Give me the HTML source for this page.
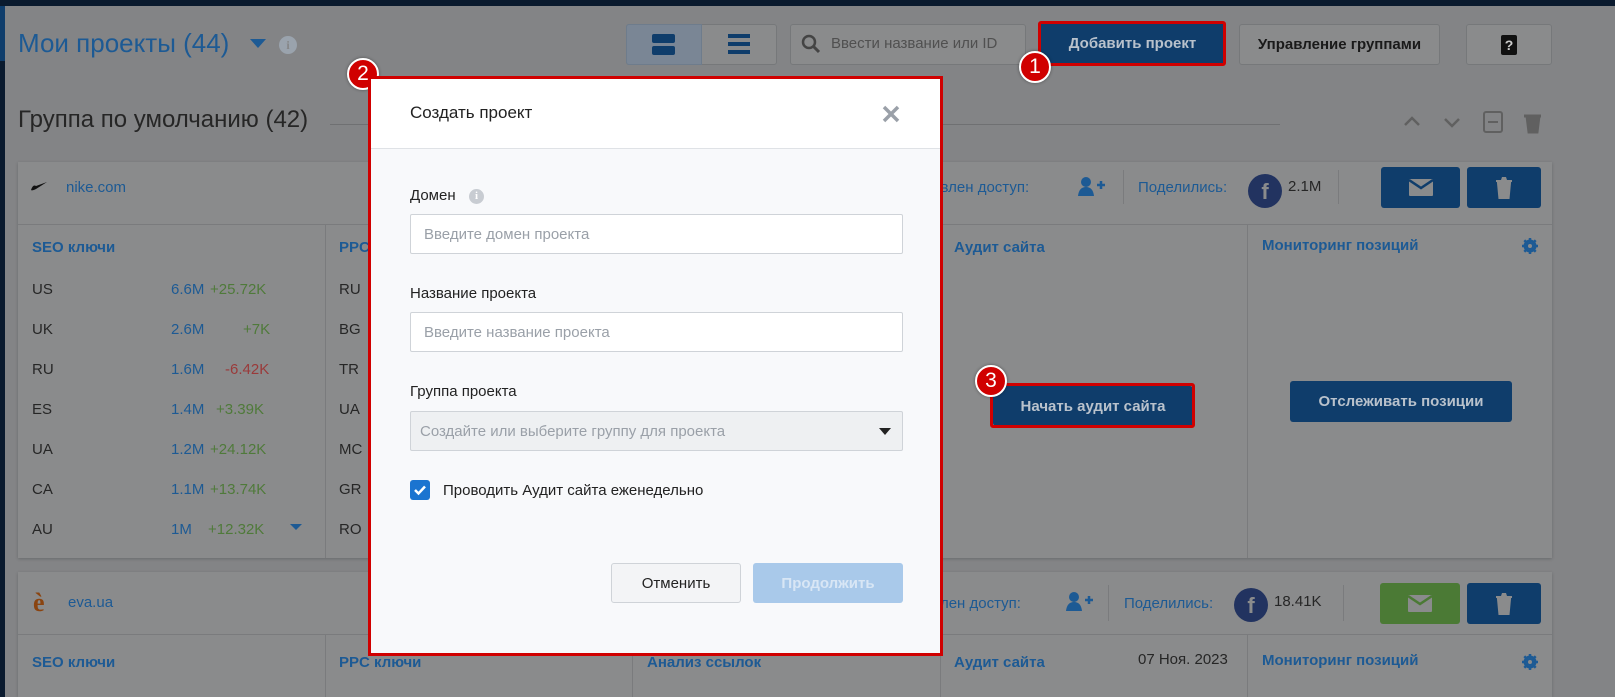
<!DOCTYPE html>
<html style="overflow:hidden"><head><meta charset="utf-8">
<style>
*{box-sizing:border-box;margin:0;padding:0}
html,body{width:1615px;height:697px;overflow:hidden}
body{position:relative;background:#838486;font-family:"Liberation Sans",sans-serif;color:#262626}
.a{position:absolute}
.btn{position:absolute;background:#0f3d6b;color:#b9c2cc;font-weight:bold;font-size:15px;display:flex;align-items:center;justify-content:center;border-radius:3px}
.wbtn{position:absolute;background:#8a8b8c;border:1px solid #76787a;border-radius:3px;font-size:15px;font-weight:bold;color:#1a1a1a;display:flex;align-items:center;justify-content:center}
.card{position:absolute;left:18px;width:1534px;background:#8a8b8c;box-shadow:0 1px 3px rgba(0,0,0,.2);overflow:hidden}
.vl{position:absolute;width:1px;background:#7a7b7d}
.hl{position:absolute;height:1px;background:#7a7b7d}
.t{position:absolute;font-size:15px;white-space:nowrap}
.h{font-weight:bold;color:#1d5a94}
.g{color:#4f7a3a}
.r{color:#9a3a3a}
.n{color:#1d5a94}
.badge{position:absolute;width:32px;height:32px;border-radius:50%;background:#d00000;border:2.5px solid #fff;color:#fff;font-size:21px;display:flex;align-items:center;justify-content:center;box-shadow:0 0 3px rgba(0,0,0,.4)}
.rb{position:absolute;border:3px solid #d00000;border-radius:3px}
#modal{position:absolute;left:368px;top:76px;width:575px;height:580px;background:#f8f9fb;border:3px solid #d00000;color:#222}
.lbl{position:absolute;left:39px;font-size:15px;color:#222}
.inp{position:absolute;left:39px;width:493px;height:40px;border:1px solid #cfd3d8;background:#fff;border-radius:2px;font-size:15px;color:#9aa0a8;padding:11px 13px}
</style></head><body>
<div class="a" style="left:0;top:0;width:1615px;height:6px;background:#0a1a2e"></div>
<div class="a" style="left:0;top:0;width:5px;height:697px;background:#0a1a2e"></div>
<div class="a" style="left:0;top:6px;width:5px;height:55px;background:#0f3d6b"></div>

<div class="t" style="left:18px;top:28px;font-size:26px;color:#1d5a94">Мои проекты (44)</div>
<svg class="a" style="left:250px;top:39px" width="16" height="10"><path d="M0 0H16L8 9Z" fill="#1d5a94"/></svg>
<div class="a" style="left:279px;top:36px;width:18px;height:18px;border-radius:50%;background:#9aa3ad;color:#858687;font-size:12px;font-weight:bold;text-align:center;line-height:18px;font-family:'Liberation Serif',serif">i</div>

<div class="a" style="left:626px;top:24px;width:151px;height:41px;border:1px solid #76787a;border-radius:3px;background:#8a8b8c"></div>
<div class="a" style="left:626px;top:24px;width:76px;height:41px;border:1px solid #6e7c8c;border-radius:3px 0 0 3px;background:#7a8695"></div>
<div class="a" style="left:652px;top:34px;width:23px;height:9px;border-radius:2px;background:#0f3d6b"></div>
<div class="a" style="left:652px;top:46px;width:23px;height:9px;border-radius:2px;background:#0f3d6b"></div>
<div class="a" style="left:728px;top:34px;width:22px;height:4px;background:#0f3d6b"></div>
<div class="a" style="left:728px;top:42px;width:22px;height:4px;background:#0f3d6b"></div>
<div class="a" style="left:728px;top:50px;width:22px;height:4px;background:#0f3d6b"></div>

<div class="a" style="left:790px;top:24px;width:236px;height:41px;border:1px solid #76787a;border-radius:3px;background:#8a8b8c"></div>
<svg class="a" style="left:801px;top:34px" width="20" height="20"><circle cx="8" cy="8" r="6" stroke="#444" stroke-width="2.5" fill="none"/><path d="M12.5 12.5L18 18" stroke="#444" stroke-width="3"/></svg>
<div class="t" style="left:831px;top:35px;color:#505050">Ввести название или ID</div>

<div class="btn" style="left:1040px;top:22px;width:185px;height:43px">Добавить проект</div>
<div class="wbtn" style="left:1239px;top:24px;width:201px;height:41px">Управление группами</div>
<div class="wbtn" style="left:1466px;top:24px;width:86px;height:41px"><span style="background:#111;color:#ccc;width:16px;height:20px;border-radius:2px;font-size:14px;display:flex;align-items:center;justify-content:center">?</span></div>

<div class="t" style="left:18px;top:106px;font-size:24px;color:#262626">Группа по умолчанию (42)</div>
<div class="hl" style="left:330px;top:124px;width:950px;background:#6f7072"></div>
<svg class="a" style="left:1400px;top:110px" width="150" height="24"><path d="M5 15L12 8L19 15" stroke="#606060" stroke-width="2.5" fill="none"/><path d="M45 9L52 16L59 9" stroke="#606060" stroke-width="2.5" fill="none"/><rect x="84" y="2" width="18" height="20" rx="2" stroke="#606060" stroke-width="2" fill="none"/><rect x="88" y="11" width="10" height="2" fill="#606060"/><path d="M124 6H141M127 6L129 22H137L139 6" stroke="#606060" stroke-width="3" fill="#606060"/></svg>

<!-- card 1 -->
<div class="card" style="top:162px;height:396px">
 <div class="hl" style="left:0;top:62px;width:1534px"></div>
 <div class="vl" style="left:307px;top:62px;height:334px"></div>
 <div class="vl" style="left:614px;top:62px;height:334px"></div>
 <div class="vl" style="left:922px;top:62px;height:334px"></div>
 <div class="vl" style="left:1229px;top:62px;height:334px"></div>
</div>
<svg class="a" style="left:31px;top:182px" width="16" height="10"><path d="M0 8Q2 2 5 4L16 0L5 7Q1 9 0 8Z" fill="#111"/></svg>
<div class="t" style="left:66px;top:179px;color:#1d5a94">nike.com</div>
<div class="t" style="left:918px;top:179px;color:#1d5a94">ставлен доступ:</div>
<svg class="a" style="left:1077px;top:176px" width="30" height="22"><circle cx="9" cy="6" r="5" fill="#1d5a94"/><path d="M1 20Q2 11 9 11Q16 11 17 20Z" fill="#1d5a94"/><path d="M20 9H28M24 5V13" stroke="#1d5a94" stroke-width="2.5"/></svg>
<div class="vl" style="left:1123px;top:170px;height:34px"></div>
<div class="t" style="left:1138px;top:179px;color:#1d5a94">Поделились:</div>
<div class="a" style="left:1248px;top:174px;width:34px;height:34px;border-radius:50%;background:#223360;color:#8a8b8c;font-weight:bold;font-size:22px;text-align:center;line-height:36px">f</div>
<div class="t" style="left:1288px;top:178px;color:#262626">2.1M</div>
<div class="vl" style="left:1338px;top:170px;height:34px"></div>
<div class="btn" style="left:1381px;top:167px;width:79px;height:41px"><svg width="24" height="17"><rect width="24" height="17" rx="1" fill="#8a8b8c"/><path d="M0 1L12 9L24 1" stroke="#0f3d6b" stroke-width="2.5" fill="none"/></svg></div>
<div class="btn" style="left:1467px;top:167px;width:74px;height:41px"><svg width="16" height="22"><path d="M0 4H16M2 6L3.5 22H12.5L14 6Z" stroke="#8a8b8c" stroke-width="2" fill="#8a8b8c"/><path d="M5 3L6 0H10L11 3" fill="#8a8b8c"/></svg></div>

<div class="t h" style="left:32px;top:239px">SEO ключи</div>
<div class="t h" style="left:339px;top:239px">PPC ключи</div>
<div class="t h" style="left:954px;top:239px">Аудит сайта</div>
<div class="t h" style="left:1262px;top:237px">Мониторинг позиций</div>
<svg class="a" style="left:1522px;top:238px" width="16" height="16"><circle cx="8" cy="8" r="5" stroke="#1d5a94" stroke-width="3" fill="none"/><path d="M8 0V16M0 8H16M2.3 2.3L13.7 13.7M13.7 2.3L2.3 13.7" stroke="#1d5a94" stroke-width="2.5"/><circle cx="8" cy="8" r="2" fill="#8a8b8c"/></svg>

<div class="t" style="left:32px;top:281px">US</div><div class="t n" style="left:171px;top:281px">6.6M</div><div class="t g" style="left:210px;top:281px">+25.72K</div>
<div class="t" style="left:32px;top:321px">UK</div><div class="t n" style="left:171px;top:321px">2.6M</div><div class="t g" style="left:243px;top:321px">+7K</div>
<div class="t" style="left:32px;top:361px">RU</div><div class="t n" style="left:171px;top:361px">1.6M</div><div class="t r" style="left:225px;top:361px">-6.42K</div>
<div class="t" style="left:32px;top:401px">ES</div><div class="t n" style="left:171px;top:401px">1.4M</div><div class="t g" style="left:216px;top:401px">+3.39K</div>
<div class="t" style="left:32px;top:441px">UA</div><div class="t n" style="left:171px;top:441px">1.2M</div><div class="t g" style="left:210px;top:441px">+24.12K</div>
<div class="t" style="left:32px;top:481px">CA</div><div class="t n" style="left:171px;top:481px">1.1M</div><div class="t g" style="left:210px;top:481px">+13.74K</div>
<div class="t" style="left:32px;top:521px">AU</div><div class="t n" style="left:171px;top:521px">1M</div><div class="t g" style="left:208px;top:521px">+12.32K</div>
<svg class="a" style="left:290px;top:524px" width="12" height="7"><path d="M0 0H12L6 6Z" fill="#1d5a94"/></svg>
<div class="t" style="left:339px;top:281px">RU</div><div class="t" style="left:339px;top:321px">BG</div><div class="t" style="left:339px;top:361px">TR</div><div class="t" style="left:339px;top:401px">UA</div><div class="t" style="left:339px;top:441px">MC</div><div class="t" style="left:339px;top:481px">GR</div><div class="t" style="left:339px;top:521px">RO</div>

<div class="btn" style="left:993px;top:386px;width:200px;height:40px">Начать аудит сайта</div>
<div class="btn" style="left:1290px;top:381px;width:222px;height:41px">Отслеживать позиции</div>

<!-- card 2 -->
<div class="card" style="top:572px;height:125px">
 <div class="hl" style="left:0;top:62px;width:1534px"></div>
 <div class="vl" style="left:307px;top:62px;height:80px"></div>
 <div class="vl" style="left:614px;top:62px;height:80px"></div>
 <div class="vl" style="left:922px;top:62px;height:80px"></div>
 <div class="vl" style="left:1229px;top:62px;height:80px"></div>
</div>
<div class="t" style="left:33px;top:588px;font-size:26px;font-weight:bold;color:#8a4410;font-family:'Liberation Serif',serif">è</div>
<div class="t" style="left:68px;top:594px;color:#1d5a94">eva.ua</div>
<div class="t" style="left:924px;top:595px;color:#1d5a94">авлен доступ:</div>
<svg class="a" style="left:1065px;top:591px" width="30" height="22"><circle cx="9" cy="6" r="5" fill="#1d5a94"/><path d="M1 20Q2 11 9 11Q16 11 17 20Z" fill="#1d5a94"/><path d="M20 9H28M24 5V13" stroke="#1d5a94" stroke-width="2.5"/></svg>
<div class="vl" style="left:1108px;top:585px;height:36px"></div>
<div class="t" style="left:1124px;top:595px;color:#1d5a94">Поделились:</div>
<div class="a" style="left:1234px;top:588px;width:34px;height:34px;border-radius:50%;background:#223360;color:#8a8b8c;font-weight:bold;font-size:22px;text-align:center;line-height:36px">f</div>
<div class="t" style="left:1274px;top:593px;color:#262626">18.41K</div>
<div class="vl" style="left:1343px;top:585px;height:36px"></div>
<div class="btn" style="left:1380px;top:583px;width:80px;height:41px;background:#4b7a35"><svg width="24" height="17"><rect width="24" height="17" rx="1" fill="#8a8b8c"/><path d="M0 1L12 9L24 1" stroke="#4b7a35" stroke-width="2.5" fill="none"/></svg></div>
<div class="btn" style="left:1467px;top:583px;width:74px;height:41px"><svg width="16" height="22"><path d="M0 4H16M2 6L3.5 22H12.5L14 6Z" stroke="#8a8b8c" stroke-width="2" fill="#8a8b8c"/><path d="M5 3L6 0H10L11 3" fill="#8a8b8c"/></svg></div>
<div class="t h" style="left:32px;top:654px">SEO ключи</div>
<div class="t h" style="left:339px;top:654px">PPC ключи</div>
<div class="t h" style="left:647px;top:654px">Анализ ссылок</div>
<div class="t h" style="left:954px;top:654px">Аудит сайта</div>
<div class="t" style="left:1138px;top:651px;color:#262626">07 Ноя. 2023</div>
<div class="t h" style="left:1262px;top:652px">Мониторинг позиций</div>
<svg class="a" style="left:1522px;top:654px" width="16" height="16"><circle cx="8" cy="8" r="5" stroke="#1d5a94" stroke-width="3" fill="none"/><path d="M8 0V16M0 8H16M2.3 2.3L13.7 13.7M13.7 2.3L2.3 13.7" stroke="#1d5a94" stroke-width="2.5"/><circle cx="8" cy="8" r="2" fill="#8a8b8c"/></svg>

<div class="rb" style="left:1038px;top:21px;width:188px;height:45px"></div>
<div class="rb" style="left:990px;top:383px;width:205px;height:45px"></div>
<div class="badge" style="left:1019px;top:51px">1</div>
<div class="badge" style="left:347px;top:58px">2</div>
<div class="badge" style="left:975px;top:365px">3</div>

<div id="modal">
 <div class="a" style="left:0;top:0;width:569px;height:70px;background:#fff;border-bottom:1px solid #dfe2e6"></div>
 <div class="t" style="left:39px;top:24px;font-size:17px;color:#222">Создать проект</div>
 <svg class="a" style="left:511px;top:26px" width="18" height="18"><path d="M2 2L16 16M16 2L2 16" stroke="#9aa0a8" stroke-width="3.5"/></svg>
 <div class="lbl" style="top:108px">Домен</div>
 <div class="a" style="left:98px;top:110px;width:15px;height:15px;border-radius:50%;background:#c8ccd2;color:#fff;font-size:11px;font-weight:bold;text-align:center;line-height:15px;font-family:'Liberation Serif',serif">i</div>
 <div class="inp" style="top:135px">Введите домен проекта</div>
 <div class="lbl" style="top:206px">Название проекта</div>
 <div class="inp" style="top:233px">Введите название проекта</div>
 <div class="lbl" style="top:304px">Группа проекта</div>
 <div class="inp" style="top:332px;background:#eef0f2;padding-left:9px">Создайте или выберите группу для проекта</div>
 <svg class="a" style="left:508px;top:349px" width="12" height="7"><path d="M0 0H12L6 7Z" fill="#222"/></svg>
 <div class="a" style="left:39px;top:401px;width:20px;height:20px;border-radius:3px;background:#1b74d0"><svg width="20" height="20"><path d="M5 10L8.5 13.5L15 6.5" stroke="#fff" stroke-width="2.5" fill="none"/></svg></div>
 <div class="t" style="left:72px;top:403px;color:#222">Проводить Аудит сайта еженедельно</div>
 <div class="a" style="left:240px;top:484px;width:130px;height:40px;border:1px solid #cfd3d8;border-radius:3px;background:#f3f4f6;font-size:15px;color:#222;display:flex;align-items:center;justify-content:center">Отменить</div>
 <div class="a" style="left:382px;top:484px;width:150px;height:40px;border-radius:3px;background:#a9c9ea;color:#d8e6f5;font-size:15px;font-weight:bold;display:flex;align-items:center;justify-content:center">Продолжить</div>
</div>
</body></html>
